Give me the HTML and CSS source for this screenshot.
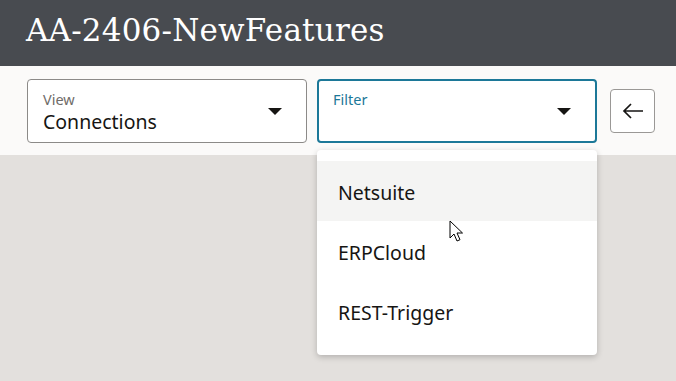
FILE: index.html
```html
<!DOCTYPE html>
<html>
<head>
<meta charset="utf-8">
<link rel="stylesheet" href="styles.css">
</head>
<body>
<header class="header">
  <h1 class="title">AA-2406-NewFeatures</h1>
</header>
<div class="toolbar">
  <div class="select">
    <div class="select-text">
      <span class="label">View</span>
      <span class="value">Connections</span>
    </div>
    <svg class="caret" width="14" height="7" viewBox="0 0 14 7"><path d="M0 0h14L7 7z" fill="#161513"/></svg>
  </div>
  <div class="select-wrap">
    <div class="select focused">
      <div class="select-text">
        <span class="label">Filter</span>
        <span class="value">&nbsp;</span>
      </div>
      <svg class="caret" width="14" height="7" viewBox="0 0 14 7"><path d="M0 0h14L7 7z" fill="#161513"/></svg>
    </div>
    <ul class="menu">
      <li class="item hover">Netsuite</li>
      <li class="item">ERPCloud</li>
      <li class="item">REST-Trigger</li>
    </ul>
  </div>
  <button class="back" aria-label="Back">
    <svg width="22" height="16" viewBox="0 0 22 16"><path d="M21 8H2M9 1L2 8l7 7" fill="none" stroke="#161513" stroke-width="1.7"/></svg>
  </button>
</div>
<main class="content"></main>
<svg class="cursor" width="14" height="22" viewBox="0 0 14 22"><path d="M1 1v17l4-4 3 7 3-1.3-3-6.7h5.5z" fill="#fff" stroke="#000" stroke-width="1" stroke-linejoin="round"/></svg>
</body>
</html>
```
FILE: styles.css
```css
* { box-sizing: border-box; }
html, body { margin: 0; padding: 0; }
body {
  width: 676px;
  height: 381px;
  overflow: hidden;
  background: #e3e0dd;
  font-family: "Noto Sans", "Open Sans", sans-serif;
  position: relative;
}
.header {
  height: 66px;
  background: #484b50;
  display: flex;
  align-items: center;
  padding-left: 26px;
}
.title {
  margin: 0;
  color: #fff;
  font-family: "DejaVu Serif", "Liberation Serif", serif;
  font-weight: normal;
  font-size: 31px;
  letter-spacing: 0.2px;
  position: relative;
  top: -3px;
}
.toolbar {
  height: 89px;
  background: #fbfaf9;
  display: flex;
  align-items: flex-start;
  padding: 13px 0 0 27px;
}
.select {
  width: 280px;
  height: 64px;
  border: 1px solid #8c8a88;
  border-radius: 4px;
  background: #fff;
  display: flex;
  align-items: center;
  justify-content: space-between;
  padding: 0 24px 0 15px;
}
.select.focused {
  border: 2px solid #1c7898;
  padding: 0 24px 0 14px;
}
.select-text {
  display: flex;
  flex-direction: column;
  padding-top: 2px;
}
.label {
  font-size: 14.5px;
  line-height: 19px;
  color: #6f6c69;
}
.focused .label { color: #1c7898; }
.value {
  font-size: 19.5px;
  line-height: 25px;
  color: #161513;
}
.select-wrap {
  margin-left: 10px;
  position: relative;
}
.menu {
  position: absolute;
  left: 0;
  top: 71px;
  width: 280px;
  margin: 0;
  padding: 11px 0 14px;
  list-style: none;
  background: #fff;
  border-radius: 4px;
  box-shadow: 0 2px 6px rgba(0,0,0,0.22);
  z-index: 2;
}
.item {
  height: 60px;
  display: flex;
  align-items: center;
  padding: 2px 0 0 21px;
  font-size: 19.5px;
  color: #161513;
}
.item.hover { background: #f4f4f3; }
.back {
  margin: 10px 0 0 13px;
  width: 45px;
  height: 44px;
  border: 1px solid #9a9896;
  border-radius: 4px;
  background: #fff;
  display: flex;
  align-items: center;
  justify-content: center;
  padding: 0;
}
.content { height: 226px; }
.cursor {
  position: absolute;
  left: 449px;
  top: 220px;
  z-index: 3;
}
```
